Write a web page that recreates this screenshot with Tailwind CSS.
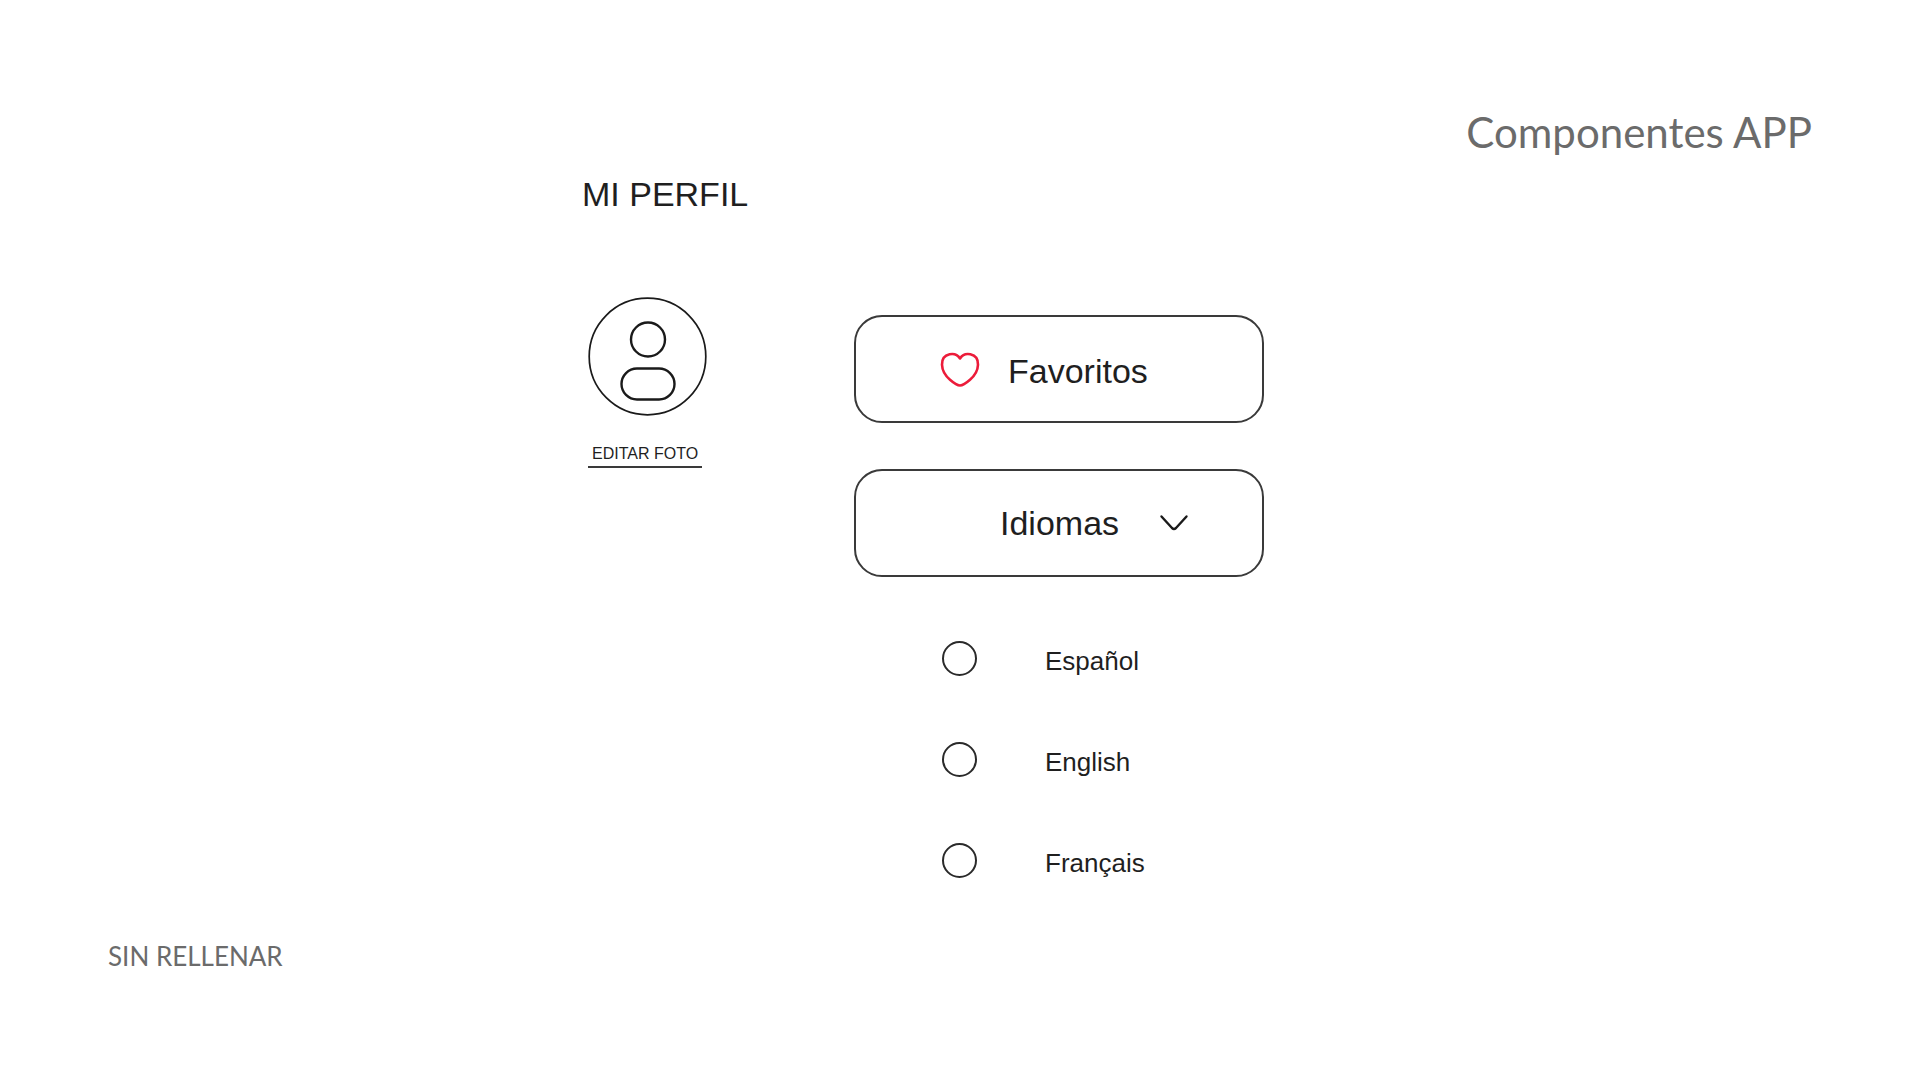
<!DOCTYPE html>
<html lang="es">
<head>
  <meta charset="UTF-8" />
  <meta name="viewport" content="width=device-width, initial-scale=1.0" />
  <title>Componentes APP - Mi perfil</title>
  <script src="https://cdn.jsdelivr.net/npm/@tailwindcss/browser@4"></script>
</head>
<body class="bg-white text-[#1f1f1f] font-['Liberation_Sans',Arial,sans-serif] min-h-screen flex flex-col">
  <header class="flex justify-end pt-26 px-27">
    <p class="text-[42px] leading-14 text-[#6b6b6b] font-[Lato,sans-serif]">Componentes APP</p>
  </header>

  <main class="ml-[30%] pl-1.5 pt-3.5">
    <h1 class="text-[34px] leading-10">MI PERFIL</h1>

    <div class="flex items-start pl-1.5 pt-[83px]">
      <!-- Foto de perfil -->
      <section class="w-[266px] shrink-0 flex flex-col items-start">
        <svg class="w-[119px] h-[119px]" viewBox="0 0 119 119" fill="none" stroke="#1a1a1a" aria-hidden="true">
          <circle cx="59.5" cy="59.5" r="58.3" stroke-width="1.7" />
          <circle cx="60" cy="42.5" r="17" stroke-width="2.4" />
          <rect x="33.5" y="71.5" width="53" height="31" rx="15.5" stroke-width="2.4" />
        </svg>
        <a href="#" class="mt-7 px-1 pb-0.5 border-b-2 border-[#3a3a3a] text-[16px] leading-5">EDITAR FOTO</a>
      </section>

      <section class="w-[410px] pt-4.5 flex flex-col">
        <button type="button" class="h-27 w-full rounded-[28px] border-2 border-[#3a3a3a] flex items-center pt-1 pl-21 gap-7 text-[34px] leading-10">
          <svg class="w-[40px] h-[40px]" viewBox="0 0 40 40" fill="none" stroke="#ec1c3a" stroke-width="2.6" stroke-linejoin="round" aria-hidden="true">
            <path d="M20 7.5C17.6 3.700 13.400 2.500 9.600 3.300C4.600 4.400 1.800 8.500 2 13.800C2.200 19.500 5.400 24.800 10 28.800C13.200 31.600 16.800 34.500 20 34.500C23.200 34.500 26.800 31.600 30 28.800C34.600 24.800 37.800 19.500 38 13.800C38.200 8.500 35.400 4.400 30.400 3.300C26.600 2.500 22.400 3.700 20 7.500Z" />
          </svg>
          <span>Favoritos</span>
        </button>

        <button type="button" id="idiomas" aria-expanded="true" class="mt-11.5 h-27 w-full rounded-[28px] border-2 border-[#3a3a3a] flex items-center pl-36 gap-10 text-[34px] leading-10">
          <span>Idiomas</span>
          <svg class="w-[30px] h-[18px]" viewBox="0 0 30 18" fill="none" stroke="#1a1a1a" stroke-width="2.4" stroke-linecap="round" stroke-linejoin="round" aria-hidden="true">
            <path d="M2.500 2.500L13 14Q15 15.800 17 14L27.500 2.500" />
          </svg>
        </button>

        <fieldset aria-labelledby="idiomas" class="mt-16 pl-22 flex flex-col gap-16.5 text-[26px] leading-9">
          <label class="flex items-center gap-17">
            <input type="radio" name="idioma" value="es" class="appearance-none w-[35px] h-[35px] rounded-full border-2 border-[#2a2a2a] checked:bg-[#2a2a2a]" />
            <span class="-mb-1">Español</span>
          </label>
          <label class="flex items-center gap-17">
            <input type="radio" name="idioma" value="en" class="appearance-none w-[35px] h-[35px] rounded-full border-2 border-[#2a2a2a] checked:bg-[#2a2a2a]" />
            <span class="-mb-1">English</span>
          </label>
          <label class="flex items-center gap-17">
            <input type="radio" name="idioma" value="fr" class="appearance-none w-[35px] h-[35px] rounded-full border-2 border-[#2a2a2a] checked:bg-[#2a2a2a]" />
            <span class="-mb-1">Français</span>
          </label>
        </fieldset>
      </section>
    </div>
  </main>

  <footer class="px-27 pt-15">
    <p class="text-[26px] leading-9 text-[#6b6b6b] font-[Lato,sans-serif]">SIN RELLENAR</p>
  </footer>
</body>
</html>
